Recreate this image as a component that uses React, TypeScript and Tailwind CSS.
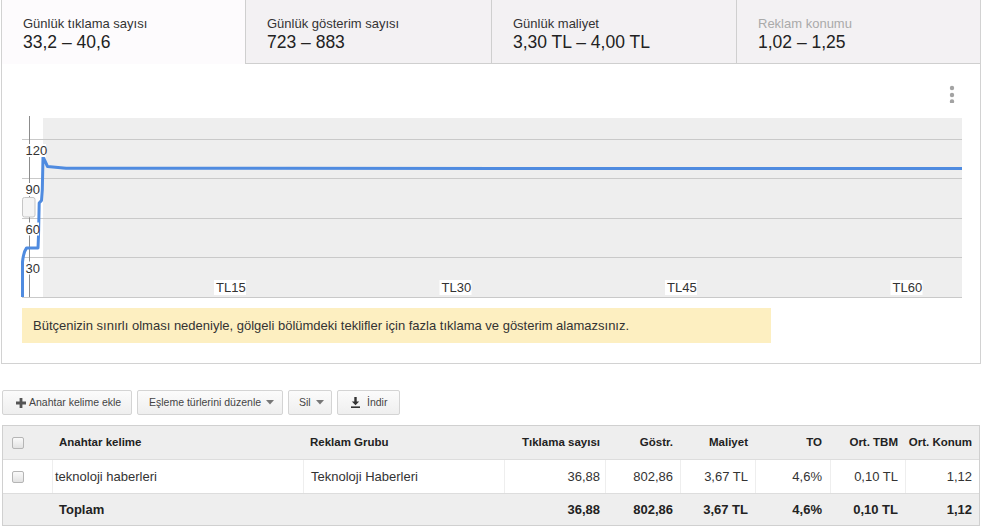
import React from "react";

interface Tab {
  label: string;
  value: string;
  width: string;
  active?: boolean;
  muted?: boolean;
}

const tabs: Tab[] = [
  { label: "Günlük tıklama sayısı", value: "33,2 – 40,6", width: "w-[243px]", active: true },
  { label: "Günlük gösterim sayısı", value: "723 – 883", width: "w-[246px]" },
  { label: "Günlük maliyet", value: "3,30 TL – 4,00 TL", width: "w-[245px]" },
  { label: "Reklam konumu", value: "1,02 – 1,25", width: "w-[244px]", muted: true },
];

const cols = "grid grid-cols-[49px_251px_201px_101px_75px_75px_75px_75px_74px]";

const numHeaders = ["Tıklama sayısı", "Göstr.", "Maliyet", "TO", "Ort. TBM", "Ort. Konum"];
const numValues = ["36,88", "802,86", "3,67 TL", "4,6%", "0,10 TL", "1,12"];
const numPad = ["pr-[5px]", "pr-[7px]", "pr-[7px]", "pr-[8px]", "pr-[7px]", "pr-[7px]"];

function Checkbox() {
  return (
    <span className="block w-[12px] h-[12px] rounded-[2px] border border-[#b5b5b5] bg-gradient-to-b from-[#fafafa] to-[#e2e2e2]" />
  );
}

function Caret() {
  return (
    <svg width="8" height="5" viewBox="0 0 8 5" className="ml-[5px]">
      <path d="M0 0 L8 0 L4 4.5 Z" fill="#777" />
    </svg>
  );
}

function ToolButton({ children, className = "" }: { children: React.ReactNode; className?: string }) {
  return (
    <button
      className={`h-[25px] flex items-center rounded-[2px] border border-[#d4d4d4] bg-gradient-to-b from-[#fbfbfb] to-[#efefef] text-[10.5px] text-[#444] ${className}`}
    >
      {children}
    </button>
  );
}

function Chart() {
  const yLabels = [
    { t: "120", y: 155, w: 21 },
    { t: "90", y: 194, w: 14 },
    { t: "60", y: 233.5, w: 14 },
    { t: "30", y: 272.5, w: 14 },
  ];
  const xLabels = [
    { t: "TL15", x: 216 },
    { t: "TL30", x: 441.5 },
    { t: "TL45", x: 667 },
    { t: "TL60", x: 892.5 },
  ];
  return (
    <svg width="945" height="190" viewBox="20 110 945 190" className="block ml-[18px]">
      <rect x="43" y="118" width="919" height="179" fill="#eeeeee" />
      {[139.5, 178.5, 218.5, 257.5, 297.5].map((y) => (
        <line key={y} x1="22" x2="962" y1={y} y2={y} stroke="#c9c9c9" strokeWidth="1" />
      ))}
      <line x1="29.5" x2="29.5" y1="116" y2="297" stroke="#8c8c8c" strokeWidth="1" />
      <path
        d="M22.5 297 L22.5 262 Q23.5 252 26.5 248 L38 248 L38.5 236 L38.8 222 L39.2 203 L41.5 200.5 L42.3 190 L43 157 L44.5 160 L47.5 166.5 L66 168.3 L962 168.5"
        fill="none"
        stroke="#4f8be0"
        strokeWidth="3"
        strokeLinejoin="round"
      />
      {yLabels.map((l) => (
        <g key={l.t}>
          <rect x="25" y={l.y - 11} width={l.w} height="13" fill="#ffffff" />
          <text x="25.5" y={l.y} fontSize="13" fill="#333" fontFamily="Liberation Sans, Arial, sans-serif">
            {l.t}
          </text>
        </g>
      ))}
      {xLabels.map((l) => (
        <g key={l.t}>
          <rect x={l.x - 2} y="280" width="32" height="15" fill="#ffffff" />
          <text x={l.x} y="292" fontSize="13" fill="#333" fontFamily="Liberation Sans, Arial, sans-serif">
            {l.t}
          </text>
        </g>
      ))}
      <rect x="22.5" y="197.5" width="12.5" height="19.5" rx="2" fill="#f4f4f4" stroke="#c6c6c6" />
    </svg>
  );
}

export default function App() {
  return (
    <div className="w-[982px] h-[528px] bg-white overflow-hidden font-['Liberation_Sans',Arial,sans-serif] text-[#333]">
      {/* top panel: metric tabs + chart */}
      <div className="ml-[1px] w-[980px] border border-t-0 border-[#d2d2d2]">
        <div className="flex h-[64px]">
          {tabs.map((t, i) => (
            <div
              key={t.label}
              className={`${t.width} pl-[21px] pt-[16px] ${
                t.active ? "bg-[#fdfbfd]" : "bg-[#f3f1f3] border-b border-[#cfcfcf]"
              } ${i > 0 ? "border-l border-[#cfcfcf]" : ""}`}
            >
              <div className={`text-[13px] leading-[15px] ${t.muted ? "text-[#aaaaaa]" : "text-[#333]"}`}>
                {t.label}
              </div>
              <div className="mt-[2px] text-[17.5px] leading-[19px] text-[#222]">{t.value}</div>
            </div>
          ))}
        </div>

        <div className="pt-[21px] pb-[20px]">
          <div className="flex justify-end pr-[25px]">
            <svg width="6" height="18" viewBox="0 0 6 18">
              <circle cx="3" cy="3" r="2.2" fill="#a3a3a3" />
              <circle cx="3" cy="10" r="2.2" fill="#a3a3a3" />
              <circle cx="3" cy="17" r="2.2" fill="#a3a3a3" transform="translate(0 -0.5)" />
            </svg>
          </div>
          <div className="mt-[7px]">
            <Chart />
          </div>
          <div className="mt-[8px] ml-[20px] w-[749px] h-[35px] bg-[#fdefc1] flex items-center pl-[11px] text-[13px] text-[#333]">
            Bütçenizin sınırlı olması nedeniyle, gölgeli bölümdeki teklifler için fazla tıklama ve gösterim alamazsınız.
          </div>
        </div>
      </div>

      {/* toolbar */}
      <div className="mt-[26px] ml-[2px] flex gap-[5px]">
        <ToolButton className="w-[130px] pl-[13px]">
          <svg width="10" height="10" viewBox="0 0 10 10" className="mr-[3px]">
            <path d="M3.6 0 H6.4 V3.6 H10 V6.4 H6.4 V10 H3.6 V6.4 H0 V3.6 H3.6 Z" fill="#555" />
          </svg>
          Anahtar kelime ekle
        </ToolButton>
        <ToolButton className="w-[146px] pl-[11px]">
          Eşleme türlerini düzenle
          <Caret />
        </ToolButton>
        <ToolButton className="w-[44px] pl-[10px]">
          Sil
          <Caret />
        </ToolButton>
        <ToolButton className="w-[63px] pl-[13px]">
          <svg width="9" height="11" viewBox="0 0 9 11" className="mr-[7px]">
            <path d="M3.3 0 H5.7 V4.5 H8.2 L4.5 8.3 L0.8 4.5 H3.3 Z" fill="#333" />
            <rect x="0" y="9.4" width="9" height="1.6" fill="#333" />
          </svg>
          İndir
        </ToolButton>
      </div>

      {/* keywords table */}
      <div className="mt-[10px] ml-[2px] w-[978px] border border-[#d0d0d0]">
        <div className={`${cols} h-[33px] bg-[#eeeeee] items-center text-[11.5px] font-bold text-[#222]`}>
          <div className="pl-[9px]">
            <Checkbox />
          </div>
          <div className="pl-[7px]">Anahtar kelime</div>
          <div className="pl-[7px]">Reklam Grubu</div>
          {numHeaders.map((h, i) => (
            <div key={h} className={`text-right ${numPad[i]}`}>
              {h}
            </div>
          ))}
        </div>
        <div className={`${cols} h-[34px] border-t border-[#dddddd] bg-white text-[13px] text-[#333]`}>
          <div className="pl-[9px] flex items-center">
            <Checkbox />
          </div>
          <div className="pl-[2px] flex items-center border-l border-[#eeeeee]">teknoloji haberleri</div>
          <div className="pl-[7px] flex items-center border-l border-[#eeeeee]">Teknoloji Haberleri</div>
          {numValues.map((v, i) => (
            <div key={v} className={`flex items-center justify-end border-l border-[#eeeeee] ${numPad[i]}`}>
              {v}
            </div>
          ))}
        </div>
        <div className={`${cols} h-[32px] border-t border-[#dddddd] bg-[#eeeeee] items-center text-[13px] font-bold text-[#222]`}>
          <div />
          <div className="pl-[7px]">Toplam</div>
          <div />
          {numValues.map((v, i) => (
            <div key={v} className={`text-right ${numPad[i]}`}>
              {v}
            </div>
          ))}
        </div>
      </div>
    </div>
  );
}
